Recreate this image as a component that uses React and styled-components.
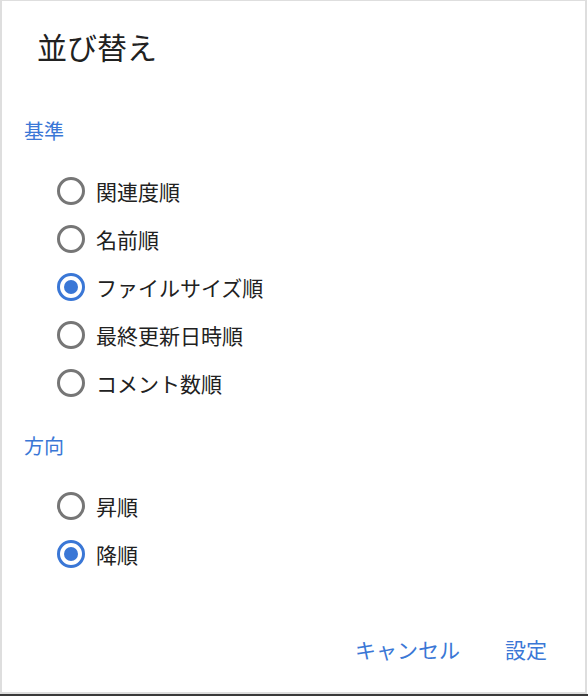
import React, { useState } from 'react';
import styled, { createGlobalStyle } from 'styled-components';

const GlobalStyle = createGlobalStyle`
  html, body {
    margin: 0;
    padding: 0;
    background: #ffffff;
  }
  body {
    font-family: "Noto Sans CJK JP", "Noto Sans", sans-serif;
  }
`;

const Page = styled.div`
  width: 588px;
  height: 696px;
  display: flex;
  flex-direction: column;
`;

const Dialog = styled.div`
  box-sizing: border-box;
  width: 587px;
  height: 694px;
  border: 2px solid #dedede;
  border-top-width: 1px;
  background: #fff;
  display: flex;
  flex-direction: column;
`;

const Shade = styled.div`
  height: 2px;
  background: #3a3a3a;
`;

const Title = styled.h2`
  margin: 0;
  padding: 21px 0 0 35px;
  font-size: 30px;
  line-height: 48px;
  font-weight: 400;
  color: #212121;
`;

const Section = styled.div`
  padding: ${(p) => p.$top}px 0 0 22px;
`;

const SectionLabel = styled.div`
  font-size: 20px;
  line-height: 32px;
  color: #3a77d6;
`;

const Options = styled.div`
  display: flex;
  flex-direction: column;
  padding: ${(p) => p.$gap}px 0 0 33px;
`;

const Option = styled.label`
  display: flex;
  align-items: center;
  height: 48px;
  gap: 11px;
  cursor: pointer;
  font-size: 21px;
  color: #212121;
`;

const Circle = styled.span`
  box-sizing: border-box;
  width: 28px;
  height: 28px;
  border-radius: 50%;
  border: 3px solid ${(p) => (p.$on ? '#3a77d6' : '#767676')};
  display: flex;
  align-items: center;
  justify-content: center;
  &::after {
    content: '';
    width: 14px;
    height: 14px;
    border-radius: 50%;
    background: #3a77d6;
    display: ${(p) => (p.$on ? 'block' : 'none')};
  }
`;

const Footer = styled.div`
  margin-top: auto;
  display: flex;
  justify-content: flex-end;
  gap: 25px;
  padding: 0 28px 23px 0;
`;

const TextButton = styled.button`
  border: none;
  background: none;
  font-family: inherit;
  font-size: 21px;
  line-height: 40px;
  padding: 0 10px;
  color: #3a77d6;
  cursor: pointer;
`;

const criteria = ['関連度順', '名前順', 'ファイルサイズ順', '最終更新日時順', 'コメント数順'];
const directions = ['昇順', '降順'];

const RadioList = ({ items, value, onChange, gap }) => (
  <Options $gap={gap}>
    {items.map((item) => (
      <Option key={item} onClick={() => onChange(item)}>
        <Circle $on={value === item} />
        {item}
      </Option>
    ))}
  </Options>
);

export default function App() {
  const [sortKey, setSortKey] = useState('ファイルサイズ順');
  const [direction, setDirection] = useState('降順');

  return (
    <Page>
      <GlobalStyle />
      <Dialog>
        <Title>並び替え</Title>
        <Section $top={45}>
          <SectionLabel>基準</SectionLabel>
          <RadioList items={criteria} value={sortKey} onChange={setSortKey} gap={20} />
        </Section>
        <Section $top={23}>
          <SectionLabel>方向</SectionLabel>
          <RadioList items={directions} value={direction} onChange={setDirection} gap={20} />
        </Section>
        <Footer>
          <TextButton>キャンセル</TextButton>
          <TextButton>設定</TextButton>
        </Footer>
      </Dialog>
      <Shade />
    </Page>
  );
}
